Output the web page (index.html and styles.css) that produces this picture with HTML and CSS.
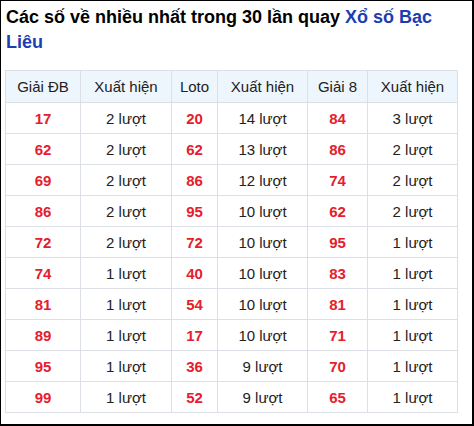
FILE: index.html
```html
<!DOCTYPE html>
<html lang="vi">
<head>
<meta charset="utf-8">
<link rel="stylesheet" href="styles.css">
</head>
<body>
<div class="frame">
  <h2 class="title">Các số về nhiều nhất trong 30 lần quay <a class="link">Xổ số Bạc Liêu</a></h2>
  <table class="stats">
    <thead>
      <tr><th class="c1">Giải ĐB</th><th class="c2">Xuất hiện</th><th class="c3">Loto</th><th class="c4">Xuất hiện</th><th class="c5">Giải 8</th><th class="c6">Xuất hiện</th></tr>
    </thead>
    <tbody>
      <tr><td class="num">17</td><td>2 lượt</td><td class="num">20</td><td>14 lượt</td><td class="num">84</td><td>3 lượt</td></tr>
      <tr><td class="num">62</td><td>2 lượt</td><td class="num">62</td><td>13 lượt</td><td class="num">86</td><td>2 lượt</td></tr>
      <tr><td class="num">69</td><td>2 lượt</td><td class="num">86</td><td>12 lượt</td><td class="num">74</td><td>2 lượt</td></tr>
      <tr><td class="num">86</td><td>2 lượt</td><td class="num">95</td><td>10 lượt</td><td class="num">62</td><td>2 lượt</td></tr>
      <tr><td class="num">72</td><td>2 lượt</td><td class="num">72</td><td>10 lượt</td><td class="num">95</td><td>1 lượt</td></tr>
      <tr><td class="num">74</td><td>1 lượt</td><td class="num">40</td><td>10 lượt</td><td class="num">83</td><td>1 lượt</td></tr>
      <tr><td class="num">81</td><td>1 lượt</td><td class="num">54</td><td>10 lượt</td><td class="num">81</td><td>1 lượt</td></tr>
      <tr><td class="num">89</td><td>1 lượt</td><td class="num">17</td><td>10 lượt</td><td class="num">71</td><td>1 lượt</td></tr>
      <tr><td class="num">95</td><td>1 lượt</td><td class="num">36</td><td>9 lượt</td><td class="num">70</td><td>1 lượt</td></tr>
      <tr><td class="num">99</td><td>1 lượt</td><td class="num">52</td><td>9 lượt</td><td class="num">65</td><td>1 lượt</td></tr>
    </tbody>
  </table>
</div>
</body>
</html>
```
FILE: styles.css
```css
html, body {
  margin: 0;
  padding: 0;
  background: #fff;
}
.frame {
  box-sizing: border-box;
  width: 474px;
  height: 426px;
  border-style: solid;
  border-color: #000;
  border-width: 1px 2px 2px 1px;
  padding: 4px 0 0 4px;
  font-family: "Liberation Sans", Arial, sans-serif;
  color: #222;
}
.title {
  margin: 0 0 15px 1px;
  font-size: 18px;
  line-height: 25px;
  font-weight: bold;
  color: #000;
}
.link {
  color: #1c3eb0;
  text-decoration: none;
}
.stats {
  border-collapse: collapse;
  table-layout: fixed;
  width: 453px;
  font-size: 15px;
}
.stats th.c1 { width: 74px; }
.stats th.c2 { width: 90px; }
.stats th.c3 { width: 45px; }
.stats th.c4 { width: 89px; }
.stats th.c5 { width: 59px; }
.stats th.c6 { width: 89px; }
.stats th, .stats td {
  border: 1px solid #dcdfe6;
  text-align: center;
  padding: 0;
  height: 30px;
  color: #222;
}
.stats th {
  font-weight: normal;
  background: #eef6fd;
  height: 31px;
}
.stats td.num {
  color: #e5202c;
  font-weight: bold;
}
```
